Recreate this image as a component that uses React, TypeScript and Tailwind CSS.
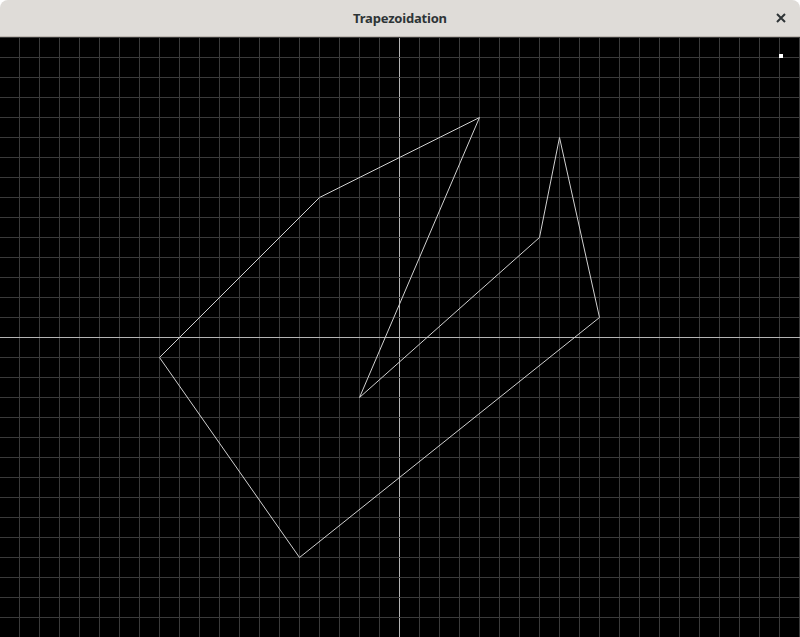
export default function App() {
  const verts = [
    [479, 80],
    [319, 160],
    [159, 320],
    [299, 520],
    [599, 280],
    [559, 100],
    [539, 200],
    [359, 360],
  ]
  const cols = Array.from({ length: 40 }, (_, i) => 19 + i * 20)
  const rows = Array.from({ length: 30 }, (_, i) => i * 20)

  return (
    <div className="w-[800px] h-[637px] bg-white flex flex-col overflow-hidden">
      {/* Header */}
      <header className="h-[37px] shrink-0 rounded-t-[8px] bg-[#dfdcd8] border-b border-[#bfb8b1] flex items-center justify-center relative pt-[1px]">
        <h1 className="text-[13px] font-bold tracking-[-0.2px] text-[#2e3436] font-['Noto_Sans',sans-serif]">Trapezoidation</h1>
        <button className="absolute right-[11px] top-[9px] w-[16px] h-[18px] flex items-center justify-center">
          <svg width="10" height="10" viewBox="0 0 10 10">
            <path d="M1 1 L9 9 M9 1 L1 9" stroke="#2e3436" strokeWidth="2" />
          </svg>
        </button>
      </header>

      {/* Canvas */}
      <main className="flex-1 bg-black">
        <svg width="800" height="600" viewBox="0 0 800 600" shapeRendering="crispEdges">
          {cols.map((x) => (
            <line key={"c" + x} x1={x + 0.5} y1={0} x2={x + 0.5} y2={600} stroke={x === 399 ? "#b4b4b4" : "#3a3a3a"} />
          ))}
          {rows.map((y) => (
            <line key={"r" + y} x1={0} y1={y + 0.5} x2={800} y2={y + 0.5} stroke={y === 300 ? "#b4b4b4" : "#3a3a3a"} />
          ))}
          <polygon
            points={verts.map((v) => v[0] + 0.5 + "," + (v[1] + 0.5)).join(" ")}
            fill="none"
            stroke="#d0d0d0"
            strokeWidth="1"
            shapeRendering="auto"
          />
          <rect x={779} y={17} width={4} height={4} fill="#ffffff" />
        </svg>
      </main>
    </div>
  )
}
